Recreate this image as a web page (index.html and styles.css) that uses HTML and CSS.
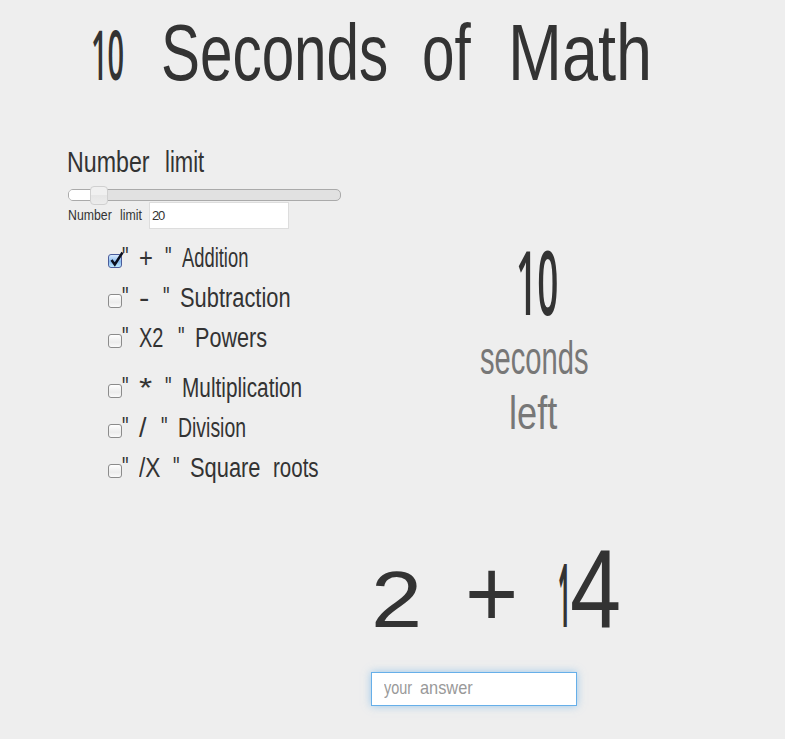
FILE: index.html
```html
<!DOCTYPE html>
<html lang="en">
<head>
<meta charset="utf-8">
<title>10 Seconds of Math</title>
<link rel="stylesheet" href="styles.css">
</head>
<body>
<h1 class="title"><span class="w t-ten">10</span> <span class="w t-seconds">Seconds</span> <span class="w t-of">of</span> <span class="w t-math">Math</span></h1>
<main class="columns">
<section class="settings">
<h2 class="heading"><span class="w">Number</span> <span class="w">limit</span></h2>
<div class="slider"><div class="range"></div><div class="handle"></div></div>
<div class="field"><label class="label" for="limit"><span class="w">Number</span> <span class="w">limit</span></label><input id="limit" class="limit" value="20"></div>
<div class="options">
<label class="option add"><span class="box checked"><svg viewBox="0 0 18 18"><path d="M4.5 9 7.8 13.5 15.5 1.5"/></svg></span><span class="w q">"</span><span class="w sym">+</span><span class="w q">"</span><span class="w name">Addition</span></label>
<label class="option sub"><span class="box"></span><span class="w q">"</span><span class="w sym">-</span><span class="w q">"</span><span class="w name">Subtraction</span></label>
<label class="option pow"><span class="box"></span><span class="w q">"</span><span class="w sym">X2</span><span class="w q">"</span><span class="w name">Powers</span></label>
</div>
<div class="options">
<label class="option mul"><span class="box"></span><span class="w q">"</span><span class="w sym">*</span><span class="w q">"</span><span class="w name">Multiplication</span></label>
<label class="option div"><span class="box"></span><span class="w q">"</span><span class="w sym">/</span><span class="w q">"</span><span class="w name">Division</span></label>
<label class="option root"><span class="box"></span><span class="w q">"</span><span class="w sym">/X</span><span class="w q">"</span><span class="w name">Square</span><span class="w second">roots</span></label>
</div>
</section>
<section class="game">
<div class="timer"><div class="count"><span class="w">10</span></div><div class="unit"><span class="w u-seconds">seconds</span></div><div class="unit"><span class="w u-left">left</span></div></div>
<div class="equation"><span class="w e-a">2</span><span class="w e-op">+</span><span class="w e-one">1</span><span class="w e-four">4</span></div>
<div class="answer"><span class="w a-your">your</span><span class="w a-answer">answer</span></div>
</section>
</main>
</body>
</html>
```
FILE: styles.css
```css
* { box-sizing: border-box; }
body {
  margin: 0;
  height: 739px;
  overflow: hidden;
  background: #eee;
  color: #333;
  font-family: "Liberation Sans", Arial, sans-serif;
}
/* condensed words: each keeps its own horizontal scale */
.w { display: block; white-space: nowrap; transform-origin: 0 50%; transform: scaleX(var(--s, 1)); }

.title {
  display: grid;
  grid-template-columns: 70px 260px 89px 1fr;
  align-items: baseline;
  margin: 0;
  padding: 3px 0 0 91px;
  height: 147px;
  font-size: 80px;
  line-height: 100px;
  font-weight: 400;
}
.t-ten { --s: .42; font-family: "Open Sans", sans-serif; font-size: 69px; font-weight: 600; }
.t-seconds { --s: .73; }
.t-of { --s: .73; margin-left: 1px; }
.t-math { --s: .81; margin-left: -2px; }

.columns { display: grid; grid-template-columns: 303px 1fr; padding-left: 68px; }

.heading { display: grid; grid-template-columns: 98px 1fr; margin: 0; height: 42px; font-size: 29px; line-height: 30px; font-weight: 400; }
.heading .w { --s: .8; margin-left: -1px; }
.heading .w + .w { --s: .76; }

.slider { display: flex; align-items: center; width: 273px; height: 12px; border: 1px solid #aaa; border-radius: 5px; background: #e1e1e1; }
.range { width: 21px; height: 10px; border-radius: 4px 0 0 4px; background: #fff; }
.handle { flex: none; width: 18px; height: 19px; border: 1px solid #d0d0d0; border-radius: 4px; background: linear-gradient(#f0f0f0 50%, #e6e6e6 50%, #ececec); }

.field { display: flex; height: 37px; margin-top: 1px; }
.label { display: grid; grid-template-columns: 52px 29px; font-size: 15px; line-height: 26px; }
.label .w { --s: .82; }
.limit { width: 140px; height: 27px; padding: 0 2px; border: 1px solid #ddd; background: #fff; color: #333; font: 13px "Liberation Sans Narrow", "Liberation Sans", sans-serif; letter-spacing: -1.3px; outline: 0; }

.options { margin: -1px 0 11px 40px; }
.option { display: grid; grid-template-columns: 14px 17px var(--a) var(--b) auto 1fr; height: 40px; font-size: 27px; line-height: 40px; }
.box { width: 14px; height: 14px; margin-top: 16px; border: 1px solid #8b8b8b; border-radius: 3px; background: linear-gradient(#fff, #ececec 60%, #fafafa); }
.checked { border-color: #4a5c9b; background: linear-gradient(#d8eaff, #8abcf0 55%, #bdeaff); }
.checked svg { display: block; width: 18px; height: 18px; margin: -4px 0 0 -2px; fill: none; stroke: #0b1020; stroke-width: 2.5; }
.q { --s: .68; }
.option .q { line-height: 38px; }
.add { --a: 26px; --b: 17px; --sym: .88; --name: .68; }
.sub { --a: 24px; --b: 16px; --sym: 1.15; --name: .81; }
.pow { --a: 39px; --b: 16px; --sym: .74; --name: .8; }
.mul { --a: 26px; --b: 16px; --sym: 1.25; --name: .77; }
.div { --a: 22px; --b: 16px; --sym: 1; --name: .72; }
.root { --a: 34px; --b: 16px; --sym: .84; --name: .81; }
.sym { --s: var(--sym); }
.name { --s: var(--name); margin-left: 1px; }
.add .name { margin-left: 0; }
.root .name { width: 83px; }
.second { --s: .76; }

.timer { height: 395px; padding-top: 88px; }
.count { display: flex; height: 97px; padding-left: 145px; font-family: "Open Sans", sans-serif; font-size: 88px; font-weight: 600; line-height: 92px; }
.count .w { --s: .42; }
.unit { display: flex; height: 55px; color: #777; font-size: 47px; line-height: 55px; }
.unit .w { position: relative; top: -2px; }
.u-seconds { --s: .62; margin-left: 109px; }
.u-left { --s: .77; margin-left: 138px; }

.equation { display: grid; grid-template-columns: 94px 93px 12px 1fr; align-items: baseline; height: 130px; line-height: 94px; }
.e-a { --s: 1.15; font-size: 80px; }
.e-op { --s: .95; font-size: 96px; }
.e-one { --s: .24; font-family: "Open Sans", sans-serif; font-size: 88px; font-weight: 700; }
.e-four { --s: .82; font-size: 112px; }

.answer { display: grid; grid-template-columns: 36px 1fr; width: 206px; height: 34px; padding-left: 12px; border: 1px solid #66afe9; background: #fff; box-shadow: 0 0 8px rgba(102, 175, 233, .6); color: #999; font-size: 19px; line-height: 30px; }
.a-your { --s: .76; }
.a-answer { --s: .86; }
```
